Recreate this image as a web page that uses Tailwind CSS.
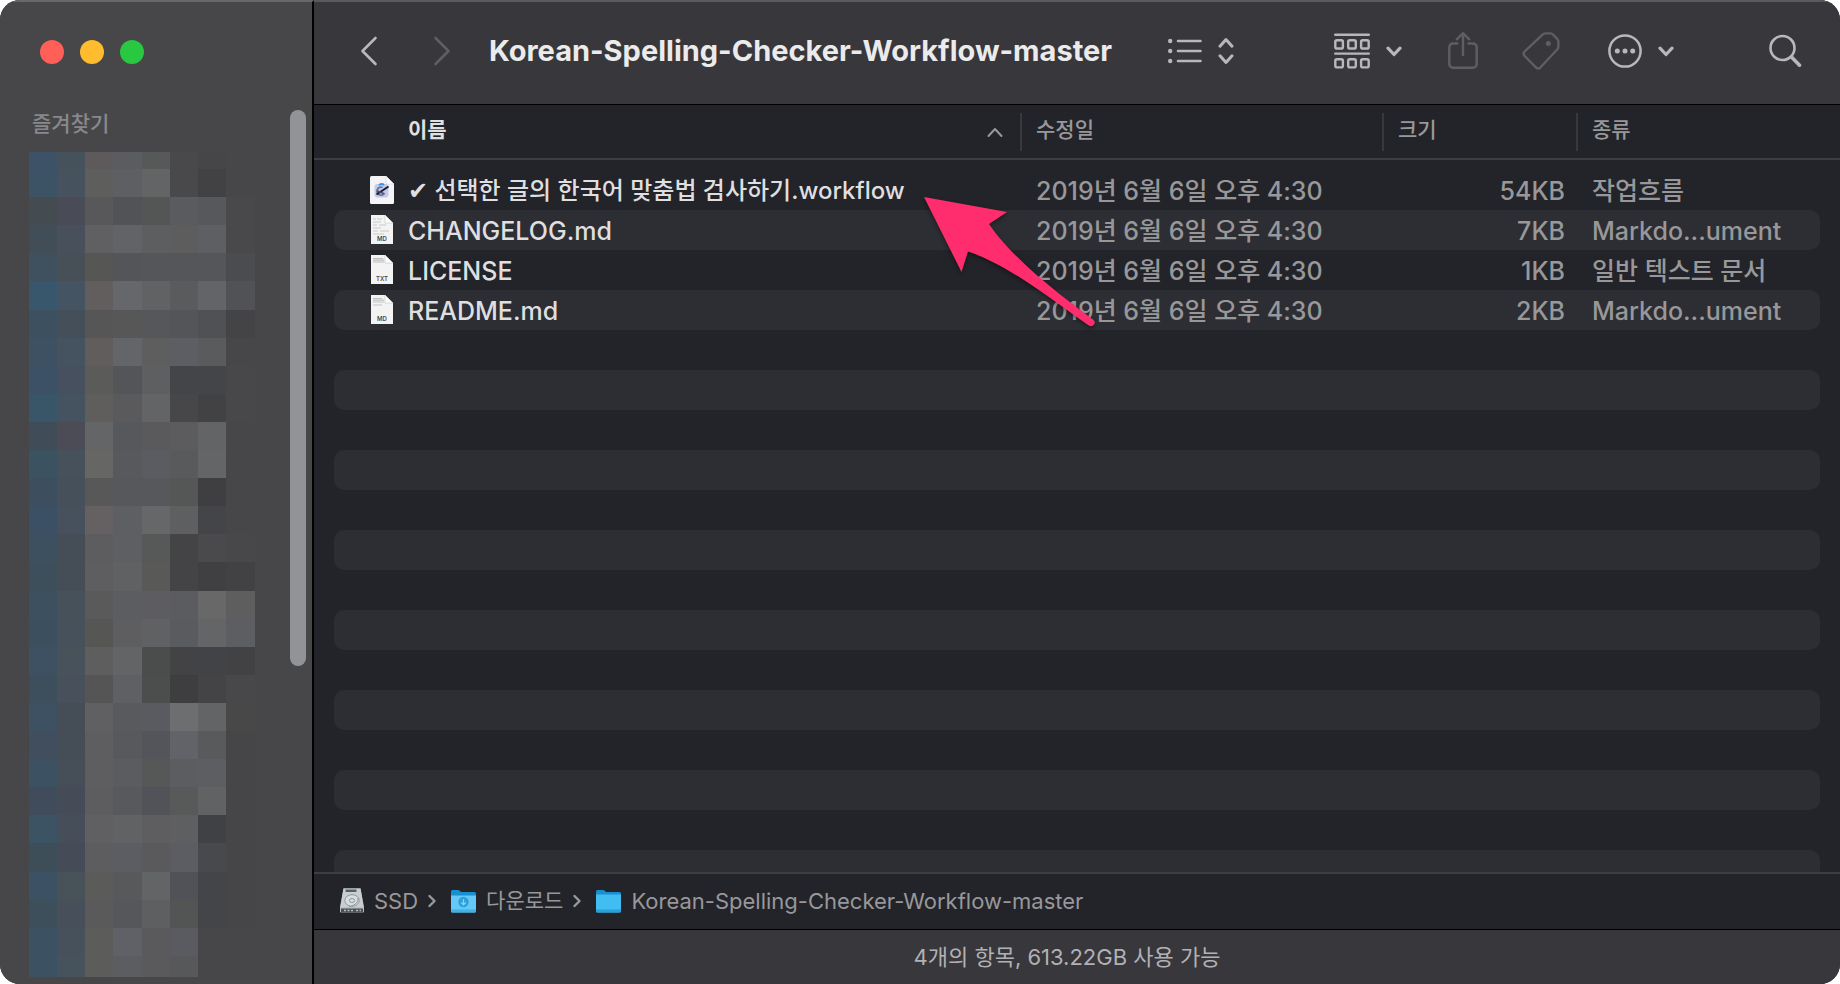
<!DOCTYPE html>
<html lang="ko">
<head>
    <meta charset="utf-8"/>
    <meta name="viewport" content="width=device-width, initial-scale=1.0"/>
    <title>Korean-Spelling-Checker-Workflow-master</title>
    <script src="https://cdn.jsdelivr.net/npm/@tailwindcss/browser@4"></script>
</head>
<body class="bg-white font-['Inter','Noto_Sans_CJK_KR',sans-serif]">
    <div class="flex h-screen overflow-hidden rounded-[20px] bg-[#232429]">
        <!-- Sidebar -->
        <aside class="flex w-[314px] shrink-0 flex-col border-t-2 border-r-2 border-t-[#68686b] border-r-black bg-[#47474a]">
            <div class="flex gap-4 pt-[38px] pl-10">
                <button class="size-6 rounded-full bg-[#ff5f57]" aria-label="닫기"></button>
                <button class="size-6 rounded-full bg-[#febc2e]" aria-label="최소화"></button>
                <button class="size-6 rounded-full bg-[#28c840]" aria-label="확대"></button>
            </div>
            <div class="mt-[46px] flex min-h-0 flex-1 justify-between pr-1.5 pl-7">
                <div>
                    <h2 class="h-[42px] pl-1 text-[21px] leading-7 font-medium text-[#88888c]">즐겨찾기</h2>
                    <svg id="favorites" class="h-[825px] w-[227px]" viewBox="0 0 227 825" shape-rendering="crispEdges" aria-hidden="true"></svg>
                </div>
                <div class="h-[556px] w-4 rounded-full bg-[#929397]"></div>
            </div>
        </aside>

        <!-- Main window -->
        <main class="relative flex min-w-0 flex-1 flex-col">
            <!-- Toolbar -->
            <header class="flex h-[105px] shrink-0 items-center border-t-2 border-b border-t-[#5b5b5f] border-b-black bg-[#38373b] pr-[38px] pb-1 pl-[46px] text-[#b8b7bc]">
                <button aria-label="뒤로">
                    <svg class="h-8 w-[18px]" viewBox="0 0 18 32" fill="none" stroke="currentColor" stroke-width="2.6" stroke-linecap="round" stroke-linejoin="round"><path d="M15.5 3 2.5 16l13 13"/></svg>
                </button>
                <button class="ml-[55px] text-[#5f5e63]" aria-label="앞으로">
                    <svg class="h-8 w-[18px]" viewBox="0 0 18 32" fill="none" stroke="currentColor" stroke-width="2.6" stroke-linecap="round" stroke-linejoin="round"><path d="m2.5 3 13 13-13 13"/></svg>
                </button>
                <h1 class="ml-[38px] text-[29px] leading-10 font-bold whitespace-nowrap text-[#ebebec]">Korean-Spelling-Checker-Workflow-master</h1>
                <button class="ml-auto flex items-center gap-4" aria-label="목록 보기">
                    <svg class="h-7 w-[34px]" viewBox="0 0 34 28" fill="none" stroke="currentColor" stroke-width="2.6" stroke-linecap="round"><path d="M10 4h22.5M10 14h22.5M10 24h22.5"/><g fill="currentColor" stroke="none"><circle cx="2.2" cy="4" r="2.2"/><circle cx="2.2" cy="14" r="2.2"/><circle cx="2.2" cy="24" r="2.2"/></g></svg>
                    <svg class="h-7 w-4" viewBox="0 0 16 28" fill="none" stroke="currentColor" stroke-width="3" stroke-linecap="round" stroke-linejoin="round"><path d="m2 9.2 6-6.700 6 6.700M2 18.800l6 6.700 6-6.700"/></svg>
                </button>
                <button class="ml-[100px] flex items-center gap-4" aria-label="그룹화">
                    <svg class="h-9 w-9" viewBox="0 0 36 36" fill="none" stroke="currentColor" stroke-width="2.4" stroke-linecap="round"><path d="M1.2 1.8h33.6M1.2 20.6h33.6"/><rect x="1.3" y="7.3" width="7.6" height="8.2" rx="1.6"/><rect x="14.2" y="7.3" width="7.6" height="8.2" rx="1.6"/><rect x="27.1" y="7.3" width="7.6" height="8.2" rx="1.6"/><rect x="1.3" y="26.2" width="7.6" height="8.2" rx="1.6"/><rect x="14.2" y="26.2" width="7.6" height="8.2" rx="1.6"/><rect x="27.1" y="26.2" width="7.6" height="8.2" rx="1.6"/></svg>
                    <svg class="h-3 w-4" viewBox="0 0 16 12" fill="none" stroke="currentColor" stroke-width="3.2" stroke-linecap="round" stroke-linejoin="round"><path d="m2 3.2 6 6.3 6-6.3"/></svg>
                </button>
                <button class="ml-[46px] text-[#5f5e63]" aria-label="공유">
                    <svg class="h-[42px] w-[30px]" viewBox="0 0 30 42" fill="none" stroke="currentColor" stroke-width="2.4" stroke-linecap="round" stroke-linejoin="round"><path d="M9.5 13.500H5a3.700 3.700 0 0 0-3.700 3.700V34A3.700 3.700 0 0 0 5 37.700h20a3.700 3.700 0 0 0 3.700-3.700V17.200a3.700 3.700 0 0 0-3.700-3.700h-4.500"/><path d="M15 25V3.500M8.800 9.300 15 3.200l6.200 6.100"/></svg>
                </button>
                <button class="ml-11 text-[#5f5e63]" aria-label="태그">
                    <svg class="h-[38px] w-[38px]" viewBox="0 0 38 38" fill="none" stroke="currentColor" stroke-width="2.4" stroke-linejoin="round"><path d="M20.500 2.600Q21.700 1.400 23.400 1.400H28.200Q29.900 1.400 31.100 2.600L35.200 6.800Q36.400 8 36.400 9.700V14.600Q36.400 16.300 35.200 17.500L18.600 35.300Q16.200 37.600 13.900 35.300L2.700 24.100Q.500 21.600 2.700 19.400Z"/><circle cx="26.300" cy="11.500" r="2.500" fill="currentColor" stroke="none"/></svg>
                </button>
                <button class="ml-12 flex items-center gap-4" aria-label="동작">
                    <svg class="h-[34px] w-[34px]" viewBox="0 0 34 34" fill="none" stroke="currentColor" stroke-width="2.5"><circle cx="17" cy="17" r="15.600"/><g fill="currentColor" stroke="none"><circle cx="9.300" cy="17" r="2.500"/><circle cx="17" cy="17" r="2.500"/><circle cx="24.700" cy="17" r="2.500"/></g></svg>
                    <svg class="h-3 w-4" viewBox="0 0 16 12" fill="none" stroke="currentColor" stroke-width="3.200" stroke-linecap="round" stroke-linejoin="round"><path d="m2 3.200 6 6.300 6-6.300"/></svg>
                </button>
                <button class="ml-[94px]" aria-label="검색">
                    <svg class="h-[34px] w-[34px]" viewBox="0 0 34 34" fill="none" stroke="currentColor" stroke-linecap="round"><circle cx="14.500" cy="14" r="12" stroke-width="2.600"/><path d="m23.500 23 8 8.200" stroke-width="3.600"/></svg>
                </button>
            </header>

            <!-- File list -->
            <div class="min-h-0 flex-1 overflow-hidden">
                <table class="w-full table-fixed border-separate border-spacing-0 text-left whitespace-nowrap">
                    <colgroup>
                        <col class="w-5"/>
                        <col/>
                        <col class="w-[362px]"/>
                        <col class="w-[194px]"/>
                        <col class="w-[244px]"/>
                        <col class="w-5"/>
                    </colgroup>
                    <thead class="text-[21px] leading-7 text-[#98989b]">
                        <tr>
                            <td class="border-b-2 border-[#3d3e43]"></td>
                            <th class="h-[55px] border-b-2 border-[#3d3e43] p-0 pr-[17px] pl-[74px] font-bold text-[#e0e0e1]">
                                <button class="flex h-[38px] w-full items-center justify-between pb-[3px]">이름
                                    <svg class="mt-1 h-3 w-4" viewBox="0 0 16 12" fill="none" stroke="#98989b" stroke-width="2" stroke-linecap="round" stroke-linejoin="round"><path d="m1.500 10 6.500-7 6.500 7"/></svg>
                                </button>
                            </th>
                            <th class="border-b-2 border-[#3d3e43] p-0 font-medium"><button class="block h-[38px] border-l-2 border-[#38393e] pb-[3px] pl-3.5">수정일</button></th>
                            <th class="border-b-2 border-[#3d3e43] p-0 font-medium"><button class="block h-[38px] border-l-2 border-[#38393e] pb-[3px] pl-3.5">크기</button></th>
                            <th class="border-b-2 border-[#3d3e43] p-0 font-medium"><button class="block h-[38px] border-l-2 border-[#38393e] pb-[3px] pl-3.5">종류</button></th>
                            <td class="border-b-2 border-[#3d3e43]"></td>
                        </tr>
                        <tr><td class="h-2.5 p-0" colspan="6"></td></tr>
                    </thead>
                    <tbody id="files" class="text-[25px] leading-[38px] font-medium text-[#98989b]">
                        <tr>
                            <td class="h-10 p-0"></td>
                            <td class="p-0 pl-9">
                                <div class="flex h-10 items-center gap-3.5 text-[#dfdfe0]">
                                    <svg class="h-7 w-6 shrink-0" viewBox="0 0 24 28"><path d="M1.500 0H16l8 8v18.500q0 1.500-1.500 1.500h-21Q0 28 0 26.500v-25Q0 0 1.500 0Z" fill="#f4f4f6"/><path d="M16 0v6.500Q16 8 17.500 8H24Z" fill="#fff" stroke="#cfcfd4" stroke-width=".6"/><rect x="4.500" y="8" width="14" height="13.500" rx="3" fill="#c5c9ea"/><path d="M9 9q3-2 5 0" stroke="#3492e8" stroke-width="2" fill="none"/><path d="M12.500 11.500a4 4 0 1 0 2 5.500" stroke="#6b7395" stroke-width="1.800" fill="none"/><path d="m6.500 18.500 12-8" stroke="#171b2c" stroke-width="2"/><path d="m7.500 15 6 2.500" stroke="#444b69" stroke-width="1.400"/></svg>
                                    <span class="pt-0.5 text-[24px]">✔ 선택한 글의 한국어 맞춤법 검사하기.workflow</span>
                                </div>
                            </td>
                            <td class="p-0 pt-0.5 pl-4">2019년 6월 6일 오후 4:30</td>
                            <td class="p-0 pt-0.5 pr-[11px] text-right">54KB</td>
                            <td class="p-0 pt-0.5 pl-4">작업흐름</td>
                            <td class="p-0"></td>
                        </tr>
                        <tr>
                            <td class="h-10 p-0"></td>
                            <td class="rounded-l-[10px] bg-[#2d2e33] p-0 pl-9">
                                <div class="flex h-10 items-center gap-3.5 text-[#dfdfe0]">
                                    <svg class="h-[30px] w-6 shrink-0" viewBox="0 0 24 30"><path d="M1 0h14l8 8v21H1Z" fill="#f3f3f3"/><path d="M15 0v8h8Z" fill="#fff" stroke="#c4c4c4" stroke-width=".6"/><path d="M3 4h3M7 4h5M3 7h8M3 10h4M9 10h7M3 13h8M3 16h5M10 16h9M3 19h11" stroke="#c9c9c9" stroke-width="1.200"/><text x="12" y="26" text-anchor="middle" font-size="6" font-weight="600" fill="#4b4b4b">MD</text></svg>
                                    <span class="pt-0.5">CHANGELOG.md</span>
                                </div>
                            </td>
                            <td class="bg-[#2d2e33] p-0 pt-0.5 pl-4">2019년 6월 6일 오후 4:30</td>
                            <td class="bg-[#2d2e33] p-0 pt-0.5 pr-[11px] text-right">7KB</td>
                            <td class="rounded-r-[10px] bg-[#2d2e33] p-0 pt-0.5 pl-4">Markdo...ument</td>
                            <td class="p-0"></td>
                        </tr>
                        <tr>
                            <td class="h-10 p-0"></td>
                            <td class="p-0 pl-9">
                                <div class="flex h-10 items-center gap-3.5 text-[#dfdfe0]">
                                    <svg class="h-[30px] w-6 shrink-0" viewBox="0 0 24 30"><path d="M1 0h14l8 8v21H1Z" fill="#f3f3f3"/><path d="M15 0v8h8Z" fill="#fff" stroke="#c4c4c4" stroke-width=".6"/><path d="M3 3.500h10M3 5.200h11M3 7h11" stroke="#bdbdbd" stroke-width="1.200"/><text x="12" y="26" text-anchor="middle" font-size="6" font-weight="600" fill="#4b4b4b">TXT</text></svg>
                                    <span class="pt-0.5">LICENSE</span>
                                </div>
                            </td>
                            <td class="p-0 pt-0.5 pl-4">2019년 6월 6일 오후 4:30</td>
                            <td class="p-0 pt-0.5 pr-[11px] text-right">1KB</td>
                            <td class="p-0 pt-0.5 pl-4">일반 텍스트 문서</td>
                            <td class="p-0"></td>
                        </tr>
                        <tr>
                            <td class="h-10 p-0"></td>
                            <td class="rounded-l-[10px] bg-[#2d2e33] p-0 pl-9">
                                <div class="flex h-10 items-center gap-3.5 text-[#dfdfe0]">
                                    <svg class="h-[30px] w-6 shrink-0" viewBox="0 0 24 30"><path d="M1 0h14l8 8v21H1Z" fill="#f3f3f3"/><path d="M15 0v8h8Z" fill="#fff" stroke="#c4c4c4" stroke-width=".6"/><path d="M3 3.500h9M3 5.200h11M3 7h11M3 10h9" stroke="#c3c3c3" stroke-width="1.200"/><text x="12" y="26" text-anchor="middle" font-size="6" font-weight="600" fill="#4b4b4b">MD</text></svg>
                                    <span class="pt-0.5">README.md</span>
                                </div>
                            </td>
                            <td class="bg-[#2d2e33] p-0 pt-0.5 pl-4">2019년 6월 6일 오후 4:30</td>
                            <td class="bg-[#2d2e33] p-0 pt-0.5 pr-[11px] text-right">2KB</td>
                            <td class="rounded-r-[10px] bg-[#2d2e33] p-0 pt-0.5 pl-4">Markdo...ument</td>
                            <td class="p-0"></td>
                        </tr>
                    </tbody>
                </table>
            </div>

            <!-- Path bar -->
            <nav class="flex h-[58px] shrink-0 items-center border-t-2 border-b border-t-[#3d3e43] border-b-black pb-0.5 pl-[26px] text-[22px] leading-7 text-[#98989b]">
                <svg class="h-[26px] w-6 shrink-0" viewBox="0 0 24 26"><path d="M3.500.500h17L24 19v4.500q0 1-1 1H1q-1 0-1-1V19Z" fill="#b9c1c4"/><path d="M3.500.500h17L23.500 19H.500Z" fill="#c9cfd1"/><path d="M5.500 1.500h11v2.500h-11Z" fill="#596064"/><ellipse cx="12" cy="12.500" rx="7.200" ry="5.800" fill="#d9dddf" stroke="#8f989c"/><ellipse cx="12" cy="12.500" rx="2.600" ry="2" fill="none" stroke="#8f989c"/><path d="M18 10q1 6-9 9" fill="none" stroke="#8f989c"/><path d="M1 20.500h22v4H1Z" fill="#4b5053"/><path d="M4 22.500h9M16 22.500h5" stroke="#b7bcbe" stroke-width="1.500" stroke-dasharray="2 1.500"/></svg>
                <a href="#" class="ml-2.5">SSD</a>
                <svg class="ml-2.5 h-3.5 w-2" viewBox="0 0 8 14" fill="none" stroke="currentColor" stroke-width="2.400" stroke-linecap="round" stroke-linejoin="round"><path d="m1.500 2 5 5-5 5"/></svg>
                <svg class="ml-[15px] h-6 w-[25px] shrink-0" viewBox="0 0 25 24"><path d="M0 2.500Q0 1 1.500 1h5.500q1 0 1.700.700L10 3h13.500Q25 3 25 4.500V10H0Z" fill="#1a8fd0"/><path d="M0 6.500h25V22q0 1.500-1.500 1.500h-22Q0 23.500 0 22Z" fill="#66c8f6"/><path d="M0 20.500h25V22q0 1.500-1.500 1.500h-22Q0 23.500 0 22Z" fill="#41b0e6"/><circle cx="12.500" cy="13" r="5.200" fill="#2e9edb"/><path d="M12.500 10v5.500M10.200 13.500l2.300 2.300 2.300-2.300" fill="none" stroke="#7fd2f9" stroke-width="1.300"/></svg>
                <a href="#" class="ml-2.5 text-[21px]">다운로드</a>
                <svg class="ml-2.5 h-3.5 w-2" viewBox="0 0 8 14" fill="none" stroke="currentColor" stroke-width="2.400" stroke-linecap="round" stroke-linejoin="round"><path d="m1.500 2 5 5-5 5"/></svg>
                <svg class="ml-[15px] h-6 w-[25px] shrink-0" viewBox="0 0 25 24"><path d="M0 2.500Q0 1 1.500 1h5.500q1 0 1.700.700L10 3h13.500Q25 3 25 4.500V10H0Z" fill="#1a8fd0"/><path d="M0 5.500h25V22q0 1.500-1.500 1.500h-22Q0 23.500 0 22Z" fill="#41bdf2"/><path d="M0 20.500h25V22q0 1.500-1.500 1.500h-22Q0 23.500 0 22Z" fill="#27a1dc"/></svg>
                <a href="#" class="ml-2.5">Korean-Spelling-Checker-Workflow-master</a>
            </nav>

            <!-- Status bar -->
            <footer class="flex h-[54px] shrink-0 items-center justify-center bg-[#38373b] pr-5 pb-px text-[22px] leading-7 text-[#b2b1b5]">4개의 항목, 613.22GB 사용 가능</footer>

            <!-- Annotation arrow -->
            <svg class="absolute top-[190px] left-[606px] h-[140px] w-[184px] drop-shadow-[0_2px_2px_rgba(0,0,0,0.4)]" viewBox="0 0 184 140" fill="#ff2d6d" aria-hidden="true"><path d="M4 7 87 22 69 34C90 65 130 98 173 129.500Q176 132 174 134.500 171.500 137.500 168 135C125 105 88 75 48 61.500L41.500 82Z"/></svg>
        </main>
    </div>

    <script>
        // Pixelated favorites: one string per row, one colour per block
        const favorites = [
            "3d5266 45515b 5e5a5b 5b5c60 575858 49494c 464649 47474a",
            "3c5265 46525d 5e5e5d 5e5f63 636465 49494c 424245 47474a",
            "444c52 494c56 58585a 525357 545555 5a5b5f 57585c 49494c",
            "414e58 48505b 606062 626367 5d5e60 5d5d5e 5e5f63 49494c",
            "3f505e 474f57 565655 545559 55565a 55565a 55565a 4b4c4f",
            "38566c 455462 625e5e 66676b 616263 5a5b5c 636468 515256",
            "3d5060 454f59 565657 575758 56575a 545559 505155 444447",
            "3d5163 45525f 615d5d 646569 5f5e5f 5d5e63 5a5b5c 47474a",
            "3c5165 46505e 5b5b5a 545559 5e5f61 444548 444548 48484b",
            "395568 44535f 605d5d 5a5a5d 626465 47474a 424245 48484b",
            "414c59 4b4c55 646567 57585c 5a5a5c 5c5b5d 626466 47474a",
            "3b5260 47515b 666665 58595c 5b5c62 595a5b 646566 47474a",
            "3d4f5f 46505a 585858 57585b 57585c 555757 3f3f42 47474a",
            "3b5065 46515d 656162 5e5f63 666768 5e5f60 444548 47474a",
            "3d505f 454d57 5d5d5f 5e5f63 575858 444447 4a4a4d 48484b",
            "3c4f5a 454d56 5e5e60 606162 595958 444447 404043 424245",
            "3d5060 46515a 5a5a5a 5c5d60 5d5d61 5b5c60 686869 5e5e5f",
            "3c4f5e 46515b 565655 5e5e60 606162 5a5b5f 646566 5d5e61",
            "3d5162 47525a 5e5e5f 636465 4b4c4c 434346 424346 424245",
            "3d4f5c 48505b 555556 5f6064 4c4d4d 3e3e41 444447 48484b",
            "3d5162 454e57 606062 595a5e 5a5b60 6d6e70 636465 484848",
            "414e5d 454e57 5e5e60 58595d 54555a 626368 595a5b 464649",
            "3c5162 464f58 5e5e60 5b5c60 565757 5c5d61 5d5e62 464649",
            "404c5c 454c57 5d5d5f 58595d 525358 585959 616263 464649",
            "3b5363 464f59 606062 616264 5e5e60 5e5f61 404144 464649",
            "3e4e58 464c57 5d5d5f 5c5d62 5a5a5c 5c5d62 48494c 464649",
            "3c5163 485259 5b5b5a 58595b 636466 515257 444548 464649",
            "3e4f5c 474f5b 5a5a5b 56575a 5e5f61 535555 444548 464649",
            "3c5162 46515b 5c5c5b 606166 5a5a5c 5a5b60 47474a 47474a",
            "3c5162 46535c 5c5c5a 5c5d61 5a5a5d 575859 47474a 47474a"
        ];
        const cell = 28.1;
        document.getElementById("favorites").innerHTML = favorites.map((row, r) =>
            row.split(" ").map((color, c) => {
                const y = r === 0 ? 0 : 17 + (r - 1) * cell;
                const h = r === 0 ? 17 : cell;
                return `<rect x="${0.6 + c * 28.25}" y="${y}" width="28.25" height="${h}" fill="#${color}"/>`;
            }).join("")
        ).join("");

        // Empty striped rows below the files
        const files = document.getElementById("files");
        for (let i = 0; i < 40; i++) {
            const row = document.createElement("tr");
            row.innerHTML = i % 2
                ? `<td class="h-10 p-0"></td><td class="rounded-[10px] bg-[#2d2e33] p-0" colspan="4"></td><td class="p-0"></td>`
                : `<td class="h-10 p-0" colspan="6"></td>`;
            files.appendChild(row);
        }
    </script>
</body>
</html>
